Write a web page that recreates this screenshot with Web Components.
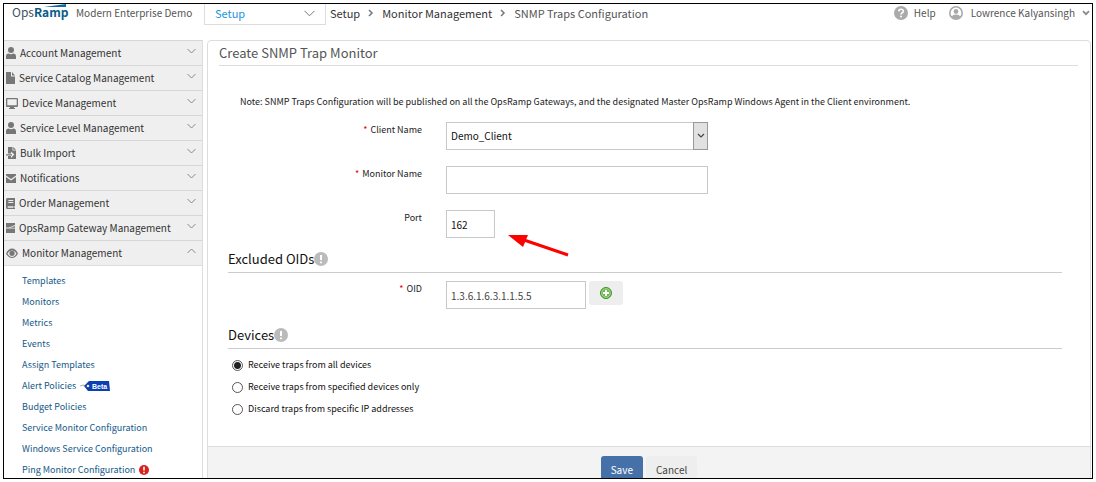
<!DOCTYPE html>
<html lang="en">
<head>
<meta charset="utf-8">
<title>SNMP Traps Configuration</title>
<style>
  html, body { height: 100%; margin: 0; }
  body { background: #fff; box-sizing: border-box; padding: 3px; overflow: hidden; font: 10px/18px "Noto Sans CJK SC", "Open Sans", sans-serif; color: #444; }
</style>
</head>
<body>
<ops-app>
  <ops-topbar slot="top"></ops-topbar>
  <ops-sidebar slot="side">
    <nav-group icon="person" label="Account Management"></nav-group>
    <nav-group icon="file" label="Service Catalog Management"></nav-group>
    <nav-group icon="screen" label="Device Management"></nav-group>
    <nav-group icon="person" label="Service Level Management"></nav-group>
    <nav-group icon="import" label="Bulk Import"></nav-group>
    <nav-group icon="mail" label="Notifications"></nav-group>
    <nav-group icon="book" label="Order Management"></nav-group>
    <nav-group icon="gateway" label="OpsRamp Gateway Management"></nav-group>
    <nav-group icon="eye" label="Monitor Management" open>
      <nav-link>Templates</nav-link>
      <nav-link>Monitors</nav-link>
      <nav-link>Metrics</nav-link>
      <nav-link>Events</nav-link>
      <nav-link>Assign Templates</nav-link>
      <nav-link mark="beta">Alert Policies</nav-link>
      <nav-link>Budget Policies</nav-link>
      <nav-link>Service Monitor Configuration</nav-link>
      <nav-link>Windows Service Configuration</nav-link>
      <nav-link mark="alert">Ping Monitor Configuration</nav-link>
    </nav-group>
  </ops-sidebar>
  <ops-panel heading="Create SNMP Trap Monitor">
    <p-note>Note: SNMP Traps Configuration will be published on all the OpsRamp Gateways, and the designated Master OpsRamp Windows Agent in the Client environment.</p-note>
    <form-field label="Client Name" required kind="select" value="Demo_Client"></form-field>
    <form-field label="Monitor Name" required></form-field>
    <form-field label="Port" value="162" size="small"><callout-arrow></callout-arrow></form-field>
    <section-title>Excluded OIDs</section-title>
    <form-field label="OID" required value="1.3.6.1.6.3.1.1.5.5" size="medium"><add-button></add-button></form-field>
    <section-title>Devices</section-title>
    <device-options></device-options>
    <action-buttons slot="footer"></action-buttons>
  </ops-panel>
</ops-app>

<script>
const define = (name, render) => customElements.define(name, class extends HTMLElement {
  constructor() {
    super();
    this.attachShadow({ mode: "open" });
  }
  connectedCallback() {
    if (!this.shadowRoot.firstChild) this.shadowRoot.innerHTML = render(this);
  }
});

const ICONS = {
  person: [10, `<circle cx="5" cy="3" r="3"/><path d="M0 12V9.6C0 7.6 1 6.7 2.6 6.6 4 7.4 6 7.4 7.4 6.6 9 6.7 10 7.6 10 9.6V12Z"/>`],
  file: [9, `<path d="M0 0H5V4.4H9V12H0ZM6 0 9 3.4H6Z"/>`],
  screen: [12, `<path fill-rule="evenodd" d="M1 1H11Q12 1 12 2V9Q12 10 11 10H8V11H9V12H3V11H4V10H1Q0 10 0 9V2Q0 1 1 1ZM1.3 2.3V8.3H10.7V2.3Z"/>`],
  import: [10, `<path fill-rule="evenodd" d="M2 0H6.5V3.5H10V12H2V9H5V11L8.4 7.5 5 4.5V6.5H2ZM7.3 0 10 2.7H7.3ZM0 7.2H6V8.4H0Z"/>`],
  mail: [10, `<path d="M0 2H10V3.6L5 7 0 3.6ZM0 5 5 8.4 10 5V11H0Z"/>`],
  book: [9, `<path fill-rule="evenodd" d="M1.5 1H9V9H8.4V11H9V12H1.5Q0 12 0 10.5V2.5Q0 1 1.5 1ZM2.3 3V4H7.3V3ZM2.3 5V6H7.3V5ZM1.7 9.3V10.8H7.4V9.3Z"/>`],
  gateway: [9, `<path d="M0 1H9V3L3 5.4H0ZM0 6.4H9V11H0ZM4 5.7 9 4V5.7Z"/>`],
  eye: [12, `<path fill-rule="evenodd" d="M0 6.5C3-.2 9-.2 12 6.5 9 12.4 3 12.4 0 6.5ZM1.5 6.5C4 11 8 11 10.5 6.5 8 2.4 4 2.4 1.5 6.5Z"/><circle cx="6" cy="6.3" r="2.6"/>`]
};

define("ops-app", () => `
  <style>
    :host { display: grid; grid-template-rows: 36px 1fr; grid-template-columns: 199px 1fr; column-gap: 4px; height: 100%; box-sizing: border-box; border: 1px solid #000; overflow: hidden; }
    header { grid-column: 1 / -1; min-width: 0; }
    aside, main { min-width: 0; min-height: 0; }
    main { padding-right: 1px; }
  </style>
  <header><slot name="top"></slot></header>
  <aside><slot name="side"></slot></aside>
  <main><slot></slot></main>`);

define("ops-topbar", () => `
  <style>
    :host { display: flex; align-items: flex-start; height: 21px; line-height: 18px; color: #555; white-space: nowrap; }
    .logo { position: relative; width: 56px; margin-left: 8px; font-size: 12px; line-height: 16px; color: #3d5361; }
    .logo b { color: #0b5c88; }
    .logo svg { position: absolute; left: 32px; top: 0; }
    .org { width: 128px; margin-left: 8px; }
    .area { position: relative; width: 122px; height: 21px; box-sizing: border-box; border: 1px solid #ddd; border-top: 0; font-size: 11px; }
    select { appearance: none; width: 100%; height: 18px; padding: 0 0 0 10px; border: 0; background: none; color: #1b94dc; font: inherit; line-height: 18px; }
    .area svg { position: absolute; right: 10px; top: 6px; pointer-events: none; }
    nav { display: flex; align-items: center; gap: 8px; margin-left: 4px; font-size: 11px; }
    nav a { color: #333; text-decoration: none; }
    .user { display: flex; align-items: center; gap: 7px; margin-left: auto; padding-right: 2px; }
    .user a { display: flex; align-items: center; gap: 6px; color: #555; text-decoration: none; }
    .user a + a { margin-left: 6px; gap: 8px; }
  </style>
  <div class="logo">Ops<b>Ramp</b><svg width="22" height="3" viewBox="0 0 22 3"><path d="M0 3 22 0V3Z" fill="#0b6fa5"/></svg></div>
  <div class="org">Modern Enterprise Demo</div>
  <div class="area">
    <select aria-label="Area"><option>Setup</option></select>
    <svg width="11" height="7" viewBox="0 0 11 7"><path d="M.5 .8 5.5 5.8 10.5 .8" fill="none" stroke="#777"/></svg>
  </div>
  <nav aria-label="Breadcrumb">
    <a href="#setup">Setup</a>
    <svg width="6" height="8" viewBox="0 0 6 8"><path d="M1 1 4 4 1 7" fill="none" stroke="#777" stroke-width="1.5"/></svg>
    <a href="#monitors">Monitor Management</a>
    <svg width="6" height="8" viewBox="0 0 6 8"><path d="M1 1 4 4 1 7" fill="none" stroke="#777" stroke-width="1.5"/></svg>
    <span>SNMP Traps Configuration</span>
  </nav>
  <div class="user">
    <a href="#help"><svg width="14" height="14" viewBox="0 0 14 14"><circle cx="7" cy="7" r="7" fill="#aaa"/><path d="M4.7 5.4Q4.8 3.3 7 3.3T9.3 5.2Q9.3 6.3 8 6.9 7 7.4 7 8.5" fill="none" stroke="#fff" stroke-width="1.6"/><circle cx="7" cy="10.6" r="1" fill="#fff"/></svg>Help</a>
    <a href="#account"><svg width="14" height="14" viewBox="0 0 14 14"><circle cx="7" cy="7" r="6.2" fill="none" stroke="#aaa" stroke-width="1.6"/><circle cx="7" cy="5.5" r="2.4" fill="#aaa"/><path d="M2.6 11Q3.6 8.6 7 8.6T11.4 11Q9.4 13 7 13T2.6 11Z" fill="#aaa"/></svg>Lowrence Kalyansingh</a>
    <svg width="8" height="6" viewBox="0 0 8 6"><path d="M1 1.2 4 4.2 7 1.2" fill="none" stroke="#888" stroke-width="1.7"/></svg>
  </div>`);

define("ops-sidebar", () => `
  <style>:host { display: block; height: 100%; box-sizing: border-box; border-right: 1px solid #ddd; }</style>
  <nav aria-label="Setup"><slot></slot></nav>`);

define("nav-group", el => {
  const [w, shape] = ICONS[el.getAttribute("icon")];
  const open = el.hasAttribute("open");
  return `
  <style>
    :host { display: block; }
    button { display: flex; align-items: center; gap: 4px; width: 100%; height: 25px; box-sizing: border-box; margin: 0; padding: 0 6px 0 2px; border: 0; border-top: 1px solid #d6d6d6; background: #efefef; font: inherit; line-height: 18px; color: #333; text-align: left; white-space: nowrap; }
    :host([open]) button { height: 26px; border-bottom: 1px solid #ddd; }
    .chev { margin-left: auto; align-self: flex-start; margin-top: 7px; }
    .sub { padding: 4px 0 0 18px; }
  </style>
  <button type="button" aria-expanded="${open}">
    <svg width="${w}" height="12" viewBox="0 0 ${w} 12" fill="#777">${shape}</svg>
    <span>${el.getAttribute("label")}</span>
    <svg class="chev" width="9" height="6" viewBox="0 0 9 6"><path d="${open ? "M.5 5 4.5 1 8.5 5" : "M.5 1 4.5 5 8.5 1"}" fill="none" stroke="#888"/></svg>
  </button>
  ${open ? `<div class="sub"><slot></slot></div>` : ""}`;
});

const MARKS = {
  beta: `<svg width="30" height="12" viewBox="0 0 30 12"><path d="M0 6Q3 4 6 6" fill="none" stroke="#aaa"/><path d="M9 1 29 1 30 11 8 11 4 6Z" fill="#0a3fb5"/><circle cx="8" cy="6" r="1.3" fill="#ffe9a0"/><text x="12" y="9" font-size="7" font-weight="bold" fill="#fff" font-family="Liberation Sans, sans-serif">Beta</text></svg>`,
  alert: `<svg width="10" height="10" viewBox="0 0 10 10"><circle cx="5" cy="5" r="5" fill="#d9221f"/><path d="M5 1.8V5.6M5 6.8V8.3" stroke="#fff" stroke-width="1.6"/></svg>`
};

define("nav-link", el => `
  <style>
    :host { display: flex; align-items: center; gap: 4px; height: 21px; font-size: 9px; white-space: nowrap; }
    a { color: #14598a; text-decoration: none; }
  </style>
  <a href="#${el.textContent.trim().toLowerCase().replace(/ /g, "-")}"><slot></slot></a>${MARKS[el.getAttribute("mark")] || ""}`);

define("ops-panel", el => `
  <style>
    :host { display: block; border: 1px solid #ddd; border-radius: 4px; background: #fff; }
    h1 { margin: 0 12px 0 11px; height: 24px; border-bottom: 1px solid #ddd; font-size: 13px; line-height: 24px; font-weight: 400; color: #555; }
    .body { display: flex; flex-direction: column; padding: 27px 28px 0 20px; }
    footer { margin-top: 26px; padding: 9px 0 12px; border-top: 1px solid #ddd; background: #f3f3f3; }
  </style>
  <h1>${el.getAttribute("heading")}</h1>
  <div class="body"><slot></slot></div>
  <footer><slot name="footer"></slot></footer>`);

define("p-note", () => `
  <style>
    :host { display: block; padding-left: 12px; margin-bottom: 3px; font-size: 9px; line-height: 18px; color: #222; }
    p { margin: 0; }
  </style>
  <p><slot></slot></p>`);

define("form-field", el => {
  const value = el.getAttribute("value") || "";
  const control = el.getAttribute("kind") === "select"
    ? `<div class="select"><select id="c"><option>${value}</option></select><span><svg width="8" height="6" viewBox="0 0 8 6"><path d="M1 1 4 4 7 1" fill="none" stroke="#444" stroke-width="1.2"/></svg></span></div>`
    : `<input id="c" type="text" value="${value}">`;
  return `
  <style>
    :host { display: grid; grid-template-columns: 194px 1fr; column-gap: 24px; margin: 8px 0; color: #222; }
    label { text-align: right; font-size: 9px; line-height: 16px; }
    i { color: #d00; font-style: normal; margin-right: 3px; }
    .row { display: flex; gap: 3px; align-items: flex-start; position: relative; }
    input, select { box-sizing: border-box; width: 262px; height: 28px; padding: 0 4px; border: 1px solid #c8c8c8; border-radius: 0; background: #fff; font: inherit; color: #111; margin: 0; appearance: none; }
    :host([size="small"]) input { width: 49px; }
    :host([size="medium"]) input { width: 140px; color: #444; }
    .select { position: relative; width: 262px; }
    .select select { display: block; }
    .select span { position: absolute; right: 0; top: 0; bottom: 0; width: 15px; box-sizing: border-box; border: 1px solid #999; background: #e1e1e1; display: grid; place-items: center; pointer-events: none; }
  </style>
  <label for="c">${el.hasAttribute("required") ? "<i>*</i>" : ""}${el.getAttribute("label")}</label>
  <div class="row">${control}<slot></slot></div>`;
});

define("callout-arrow", () => `
  <style>:host { position: absolute; left: 62px; top: 24px; }</style>
  <svg width="62" height="24" viewBox="0 0 62 24" style="display:block"><path d="M16 6 60 21" stroke="#f00" stroke-width="3"/><path d="M0 1 20 1 15 13Z" fill="#f00"/></svg>`);

define("add-button", () => `
  <style>
    :host { display: block; }
    button { display: grid; place-items: center; width: 34px; height: 24px; padding: 0; border: 0; border-radius: 3px; background: #eee; }
  </style>
  <button type="button" aria-label="Add OID"><svg width="12" height="12" viewBox="0 0 12 12"><circle cx="6" cy="6" r="5.5" fill="#6cb84c" stroke="#3f8f35"/><circle cx="6" cy="6" r="4.3" fill="none" stroke="#b9e0a3" stroke-width=".8"/><path d="M6 3V9M3 6H9" stroke="#fff" stroke-width="1.8"/></svg></button>`);

define("section-title", () => `
  <style>
    :host { display: block; }
    :host(:not(:first-of-type)) { margin-top: 5px; }
    h2 { display: flex; align-items: center; height: 27px; box-sizing: border-box; margin: 0; border-bottom: 1px solid #ccc; font-size: 13px; line-height: 26px; font-weight: 400; color: #111; }
  </style>
  <h2><slot></slot><svg width="14" height="14" viewBox="0 0 14 14"><circle cx="7" cy="7" r="7" fill="#bbb"/><path d="M7 3V8M7 9.4V11.2" stroke="#fff" stroke-width="2"/></svg></h2>`);

define("device-options", () => `
  <style>
    :host { display: block; margin-top: 5px; }
    fieldset { margin: 0; padding: 0 0 0 4px; border: 0; font-size: 9px; line-height: 18px; color: #111; }
    label { display: flex; align-items: center; gap: 5px; height: 22px; }
    input { appearance: none; width: 11px; height: 11px; margin: 0; box-sizing: border-box; border: 1px solid #555; border-radius: 50%; background: #fff; }
    input:checked { background: radial-gradient(circle, #222 0 3px, #fff 4px); }
  </style>
  <fieldset aria-label="Devices">
    <label><input type="radio" name="d" checked>Receive traps from all devices</label>
    <label><input type="radio" name="d">Receive traps from specified devices only</label>
    <label><input type="radio" name="d">Discard traps from specific IP addresses</label>
  </fieldset>`);

define("action-buttons", () => `
  <style>
    :host { display: flex; justify-content: center; gap: 3px; }
    button { height: 27px; padding: 0 10px; border: 0; border-radius: 3px; background: #eee; color: #444; font: inherit; }
    .save { background: #4671a8; color: #fff; }
  </style>
  <button class="save" type="submit">Save</button><button type="button">Cancel</button>`);
</script>
</body>
</html>
